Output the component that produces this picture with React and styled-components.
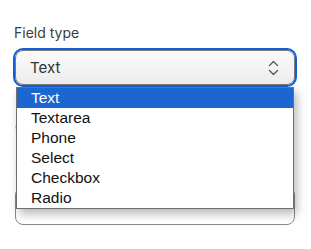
import React, { useState } from 'react';
import styled, { createGlobalStyle } from 'styled-components';

const GlobalStyle = createGlobalStyle`
  body {
    margin: 0;
    background: #fff;
    font-family: Inter, "Noto Sans", sans-serif;
  }
`;

const Page = styled.div`
  padding: 24px 15px 0 14px;
  display: flex;
  flex-direction: column;
`;

const Field = styled.div`
  display: flex;
  flex-direction: column;
  margin-top: ${(p) => p.$top || 0}px;
`;

const Label = styled.label`
  font-size: 14px;
  line-height: 17px;
  color: #3d3d3d;
  margin-bottom: 9px;
  padding-left: ${(p) => p.$indent || 0}px;
`;

const Hint = styled.div`
  font-size: 13px;
  line-height: 16px;
  color: #7a6a40;
  padding-left: 1px;
`;

const SelectWrap = styled.div`
  position: relative;
`;

const SelectBox = styled.div`
  height: 35px;
  box-sizing: border-box;
  margin: 0 1px;
  border: 1px solid #7a7a7a;
  border-radius: 8px;
  outline: 2px solid #0f5fd6;
  outline-offset: 0;
  background: linear-gradient(#fbfbfb, #ececec);
  display: flex;
  align-items: center;
  justify-content: space-between;
  padding: 0 15px 0 14px;
  font-size: 15px;
  color: #333;
`;

const Chevrons = () => (
  <svg width="11" height="16" viewBox="0 0 11 16" fill="none" stroke="#5a5a5a" strokeWidth="1.4" strokeLinecap="round" strokeLinejoin="round">
    <path d="M1.5 5.5 L5.5 1.5 L9.5 5.5" />
    <path d="M1.5 10.5 L5.5 14.5 L9.5 10.5" />
  </svg>
);

const Menu = styled.ul`
  position: absolute;
  top: 100%;
  left: 2px;
  right: 2px;
  margin: 2px 0 0;
  padding: 0;
  list-style: none;
  background: #fff;
  border: 1px solid #6f6f6f;
  box-shadow: 3px 5px 9px rgba(0, 0, 0, 0.28);
  z-index: 2;
`;

const Option = styled.li`
  height: 20px;
  line-height: 20px;
  padding-left: 14px;
  font-family: "Liberation Sans", Arial, sans-serif;
  font-size: 15.5px;
  color: ${(p) => (p.$active ? '#fff' : '#111')};
  background: ${(p) => (p.$active ? '#1b66d1' : '#fff')};
`;

const InputBox = styled.div`
  height: 38px;
  box-sizing: border-box;
  margin: 0 1px;
  border: 1px solid #8a8a8a;
  border-radius: 8px;
  background: #fff;
`;

const types = ['Text', 'Textarea', 'Phone', 'Select', 'Checkbox', 'Radio'];

export default function App() {
  const [value] = useState('Text');
  return (
    <>
      <GlobalStyle />
      <Page>
        <Field>
          <Label>Field type</Label>
          <SelectWrap>
            <SelectBox>
              <span>{value}</span>
              <Chevrons />
            </SelectBox>
            <Menu>
              {types.map((t) => (
                <Option key={t} $active={t === value}>{t}</Option>
              ))}
            </Menu>
          </SelectWrap>
        </Field>
        <Field $top={34}>
          <Hint>Choose how the field is shown</Hint>
        </Field>
        <Field $top={26}>
          <Label $indent={1}>Label</Label>
          <InputBox />
        </Field>
      </Page>
    </>
  );
}
